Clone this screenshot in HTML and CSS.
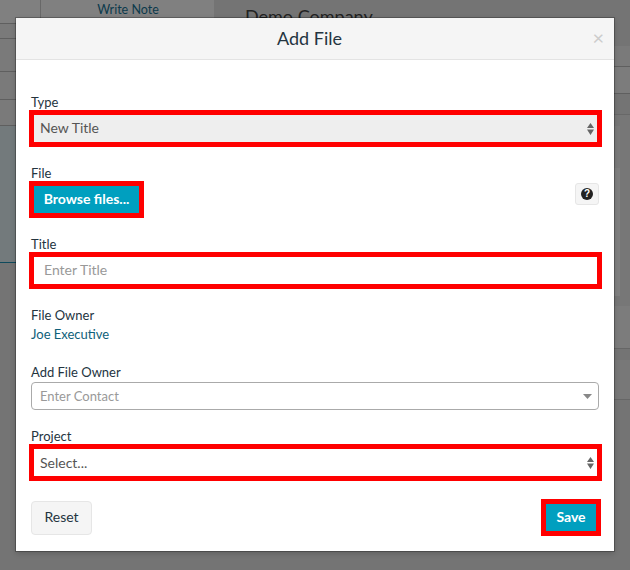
FILE: index.html
```html
<!DOCTYPE html>
<html lang="en">
<head>
<meta charset="utf-8">
<title>Add File</title>
<link rel="stylesheet" href="styles.css">
</head>
<body>
<div class="page">
  <div class="side">
    <div class="side-row side-row-top">
      <div class="side-gutter"></div>
      <a class="side-tab">Write Note</a>
    </div>
    <div class="side-row side-h16"></div>
    <div class="side-row side-h33"></div>
    <div class="side-row side-h28"></div>
    <div class="side-row side-h26"></div>
    <div class="side-fill"></div>
    <div class="side-rest"></div>
  </div>
  <div class="main">
    <h1 class="company">Demo Company</h1>
    <div class="main-row main-h20"></div>
    <div class="main-row main-h27 main-light"></div>
    <div class="main-row main-h21"></div>
    <div class="panel">
      <div class="panel-top"></div>
      <div class="panel-bottom"></div>
    </div>
    <div class="main-row main-h43 main-light"></div>
    <div class="main-row main-h11"></div>
    <div class="main-row main-h40 main-light"></div>
  </div>
</div>

<div class="modal">
  <header class="modal-header">
    <h2 class="modal-title">Add File</h2>
    <span class="modal-close">×</span>
  </header>
  <form class="modal-body">
    <div class="group">
      <label class="label">Type</label>
      <div class="flag select select-muted">
        <span class="select-value">New Title</span>
        <svg class="updown" width="7" height="12" viewBox="0 0 7 12"><path d="M3.500 0L7 5H0zM0 6.500H7L3.500 12z"/></svg>
      </div>
    </div>
    <div class="group">
      <label class="label">File</label>
      <div class="file-row">
        <button type="button" class="flag btn-primary btn-browse">Browse files...</button>
        <button type="button" class="help"><span class="help-dot">?</span></button>
      </div>
    </div>
    <div class="group">
      <label class="label">Title</label>
      <input class="flag text-input" type="text" placeholder="Enter Title">
    </div>
    <div class="group">
      <label class="label">File Owner</label>
      <a class="owner">Joe Executive</a>
    </div>
    <div class="group">
      <label class="label label-spaced">Add File Owner</label>
      <div class="combo">
        <span>Enter Contact</span>
        <svg class="caret" width="9" height="5" viewBox="0 0 9 5"><path d="M0 0H9L4.500 5z"/></svg>
      </div>
    </div>
    <div class="group">
      <label class="label">Project</label>
      <div class="flag select">
        <span>Select...</span>
        <svg class="updown" width="7" height="12" viewBox="0 0 7 12"><path d="M3.500 0L7 5H0zM0 6.500H7L3.500 12z"/></svg>
      </div>
    </div>
    <footer class="modal-footer">
      <button type="button" class="btn-reset">Reset</button>
      <button type="button" class="flag btn-primary btn-save">Save</button>
    </footer>
  </form>
</div>
</body>
</html>
```
FILE: styles.css
```css
* { box-sizing: border-box; }
html, body { margin: 0; height: 100%; }
body {
  background: #747474;
  font-family: "Lato", "Liberation Sans", sans-serif;
  font-size: 13px;
  color: #24343f;
  overflow: hidden;
}
.page { display: flex; height: 570px; }

.side { width: 214px; display: flex; flex-direction: column; flex: none; }
.side-row { background: #7a7a7a; border-bottom: 1px solid #5f5f5f; }
.side-row-top { display: flex; height: 24px; background: #808080; }
.side-gutter { width: 41px; border-right: 1px solid #686868; }
.side-tab { flex: 1; padding-left: 1px; text-align: center; font-size: 12.500px; line-height: 19px; color: #0c3a4c; }
.side-h16 { height: 15px; }
.side-h33 { height: 33px; }
.side-h28 { height: 28px; }
.side-h26 { height: 26px; }
.side-fill { height: 137px; background: #737a7c; border-bottom: 1px solid #0f4a5c; }
.side-rest { flex: 1; background: #747474; }

.main { flex: 1; display: flex; flex-direction: column; }
.company { margin: 0 0 0 31px; height: 46px; padding-top: 4px; font-size: 18px; line-height: 24px; font-weight: 400; color: #222; }
.main-row { background: #747474; }
.main-h20 { height: 21px; background: #7a7a7a; border-bottom: 1px solid #5f5f5f; }
.main-h27 { height: 27px; border-bottom: 1px solid #5f5f5f; }
.main-h21 { height: 21px; border-bottom: 1px solid #686868; }
.main-light { background: #7c7c7c; }
.panel { height: 191px; padding: 11px 10px 10px 0; display: flex; flex-direction: column; background: #777; }
.panel-top { height: 42px; background: #7b7b7b; }
.panel-bottom { flex: 1; background: #808080; }
.main-h43 { height: 43px; border-bottom: 1px solid #666; }
.main-h11 { height: 11px; }
.main-h40 { height: 40px; border-bottom: 1px solid #666; background: #787878; }

.modal {
  position: absolute;
  top: 18px;
  left: 16px;
  width: 598px;
  background: #fff;
  box-shadow: 0 0 0 1px rgba(0, 0, 0, .25), 0 2px 6px rgba(0, 0, 0, .2);
}
.modal-header {
  position: relative;
  height: 42px;
  padding-right: 11px;
  background: #f5f5f5;
  border-bottom: 1px solid #e3e3e3;
  text-align: center;
}
.modal-title { margin: 0; font-size: 18px; line-height: 40px; font-weight: 400; color: #24343f; }
.modal-close {
  position: absolute;
  top: 8px;
  right: 10px;
  font-size: 20px;
  line-height: 22px;
  color: #ccc;
}
.modal-body { display: block; padding: 34px 15px 15px; }
.group { margin-bottom: 18px; }
.label { display: block; height: 16px; line-height: 16px; }
.label-spaced { margin-bottom: 2px; }

.flag { border: 5px solid #f00; margin: 0 -3px 0 -2px; }
.select {
  height: 37px;
  display: flex;
  align-items: center;
  justify-content: space-between;
  padding: 0 3px 0 6px;
  background: #fff;
  color: #555;
  font-size: 14px;
}
.select-value { position: relative; top: -1px; }
.select-muted { background: #eee; }
.updown { fill: #666; }

.file-row { display: flex; align-items: flex-start; justify-content: space-between; }
.btn-primary {
  height: 37px;
  padding: 0 0 2px;
  background: #009fbf;
  color: #fff;
  font: 700 14px "Lato", "Liberation Sans", sans-serif;
}
.btn-browse { width: 115px; margin-right: 0; }
.help {
  width: 24px;
  height: 22px;
  margin-top: 2px;
  padding: 0;
  display: flex;
  align-items: center;
  justify-content: center;
  background: #f5f5f5;
  border: 1px solid #e6e6e6;
  border-radius: 3px;
}
.help-dot {
  width: 12px;
  height: 12px;
  border-radius: 50%;
  background: #222;
  color: #fff;
  font: 700 10px/12px "Liberation Sans", sans-serif;
  text-align: center;
}
.text-input {
  display: block;
  width: calc(100% + 5px);
  height: 37px;
  padding: 0 10px 2px;
  outline: none;
  font: 14px "Lato", "Liberation Sans", sans-serif;
  color: #555;
}
.text-input::placeholder { color: #999; opacity: 1; }
.owner { display: block; height: 24px; line-height: 22px; color: #0f5f7a; margin-bottom: -1px; }
.combo {
  height: 28px;
  display: flex;
  align-items: center;
  justify-content: space-between;
  padding: 0 6px 0 8px;
  border: 1px solid #aaa;
  border-radius: 4px;
  color: #999;
}
.caret { fill: #888; }
.modal-footer {
  display: flex;
  align-items: center;
  justify-content: space-between;
}
.btn-reset {
  width: 61px;
  height: 34px;
  padding: 0 0 2px;
  background: #f5f5f5;
  border: 1px solid #e6e6e6;
  border-radius: 4px;
  color: #24343f;
  font: 14px "Lato", "Liberation Sans", sans-serif;
}
.btn-save { width: 60px; margin: 0 -2px 0 0; }
```
